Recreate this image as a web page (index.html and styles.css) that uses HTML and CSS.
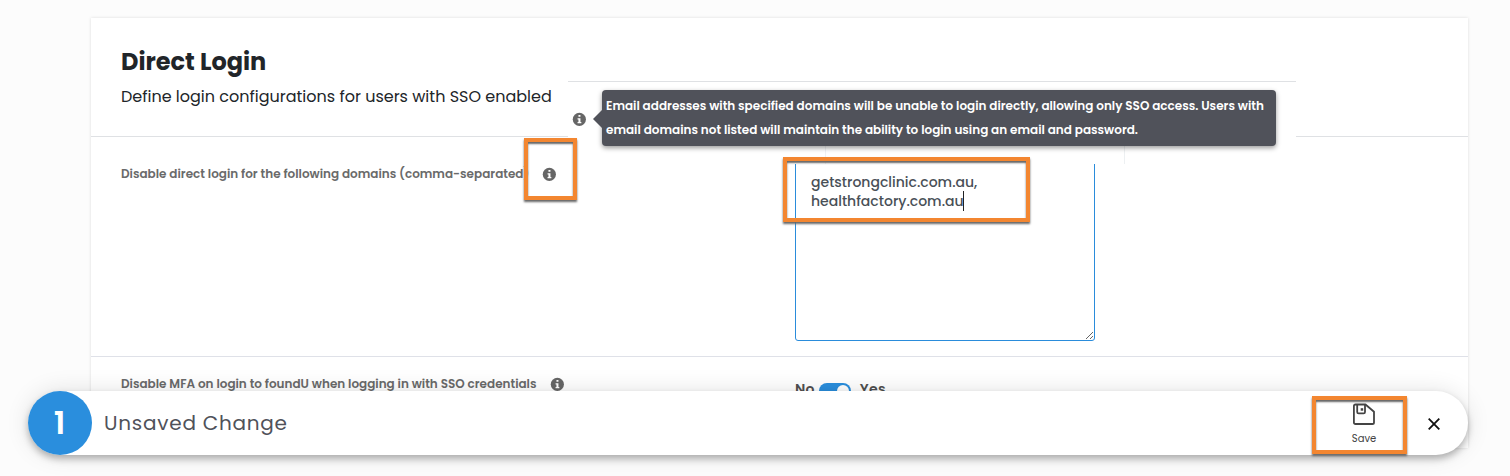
FILE: index.html
```html
<!DOCTYPE html>
<html lang="en">
<head>
<meta charset="utf-8">
<title>Direct Login</title>
<link rel="stylesheet" href="styles.css">
</head>
<body>
<svg class="defs" width="0" height="0">
  <symbol id="info" viewBox="-.35 -.35 14 14">
    <circle cx="7" cy="7" r="6.6" fill="#666"/>
    <path d="M6.1 2.7h2v1.8h-2zM5.2 5.8h2.9v3.9h.9v1.3H5.2V9.700h.9V7.100h-.9z" fill="#fff"/>
  </symbol>
</svg>
<main class="card">
  <header class="card-header">
    <h1 class="title">Direct Login</h1>
    <p class="subtitle">Define login configurations for users with SSO enabled</p>
  </header>
  <section class="row row-domains">
    <div class="label-cell">
      <label class="label label-domains" for="domains">Disable direct login for the following domains (comma-separated)</label>
      <svg class="info info-domains"><use href="#info"/></svg>
    </div>
    <textarea class="domains" id="domains" spellcheck="false">getstrongclinic.com.au,
healthfactory.com.au</textarea>
  </section>
  <section class="row row-mfa">
    <div class="label-cell">
      <span class="label label-mfa">Disable MFA on login to foundU when logging in with SSO credentials</span>
      <svg class="info"><use href="#info"/></svg>
    </div>
    <div class="switch">
      <span>No</span><span class="track"><span class="knob"></span></span><span>Yes</span>
    </div>
  </section>
</main>

<aside class="hint">
  <svg class="info"><use href="#info"/></svg>
  <div class="tooltip">
    <div class="tip-one">Email addresses with specified domains will be unable to login directly, allowing only SSO access. Users with</div>
    <div class="tip-two">email domains not listed will maintain the ability to login using an email and password.</div>
  </div>
</aside>
<i class="caret"></i>

<footer class="savebar">
  <span class="count">1</span>
  <span class="message">Unsaved Change</span>
  <button class="save">
    <svg width="24" height="23" viewBox="0 0 24 23" fill="none" stroke="#444" stroke-width="1.8" stroke-linejoin="round">
      <path d="M3.500 1.500H13.500L22 8.700V19.400Q22 21 20.400 21H3.500Q1.900 21 1.900 19.400V3.100Q1.900 1.500 3.500 1.500Z"/>
      <path d="M5.200 1.500V9Q5.200 10.400 6.600 10.400H11.600Q13 10.400 13 9V1.500"/>
      <rect x="8.700" y="5.200" width="2.500" height="2.500" fill="#444" stroke="none"/>
    </svg>
    <span>Save</span>
  </button>
  <button class="close" aria-label="Close">
    <svg width="12" height="12" viewBox="0 0 12 12" stroke="#111" stroke-width="1.800"><path d="M.7 .7L11.300 11.300M11.300 .7L.7 11.300"/></svg>
  </button>
</footer>
<i class="mark mark-info"></i>
<i class="mark mark-domains"></i>
<i class="mark mark-save"></i>
</body>
</html>
```
FILE: styles.css
```css
* { box-sizing: border-box; }
body {
  margin: 0;
  height: 476px;
  padding: 18px 42px 0 91px;
  overflow: hidden;
  position: relative;
  background: #fcfcfc;
  font-family: Poppins, Inter, "Open Sans", sans-serif;
  color: #212529;
}
.defs { position: absolute; }
.card {
  width: 1377px;
  height: 430px;
  background: #fff;
  box-shadow: 0 0 3px rgba(0, 0, 0, .13);
}
.card-header {
  height: 119px;
  padding: 26px 30px 0;
  border-bottom: 1px solid #dfe1e4;
}
.title { margin: 0; font-size: 24px; line-height: 36px; font-weight: 700; }
.subtitle { margin: 5px 0 0; font-size: 16px; line-height: 24px; white-space: nowrap; }
.row { display: grid; grid-template-columns: 674px 1fr; padding: 0 30px; }
.row-domains { height: 220px; border-bottom: 1px solid #dfe1e8; padding-top: 20px; }
.row-mfa { padding-top: 17px; }
.label-cell { display: flex; align-items: center; height: 20px; }
.row-domains .label-cell { margin-top: 7px; }
.label { font-size: 12px; font-weight: 600; color: #6a6a6a; white-space: nowrap; }
.label-domains { width: 421px; }
.label-mfa { width: 429px; }
.info { width: 14px; height: 14px; flex: none; }
.domains {
  width: 300px;
  height: 184px;
  padding: 15px;
  border: 1px solid #2a8cdb;
  border-radius: 3px;
  outline: none;
  overflow: hidden;
  background: #fff;
  color: #495057;
  font: 500 14px/19px Poppins, Inter, "Open Sans", sans-serif;
}
.switch { display: flex; align-items: flex-start; font-size: 14px; line-height: 20px; font-weight: 600; color: #505050; padding-top: 5px; letter-spacing: .3px; }
.track { width: 32px; height: 16px; margin: 4px 9px 0 4px; padding: 2px; border-radius: 8px; background: #2a8edd; display: flex; justify-content: flex-end; }
.knob { width: 12px; height: 12px; border-radius: 50%; background: #fff; }

.hint {
  position: absolute;
  left: 568px;
  top: 81px;
  width: 728px;
  height: 83px;
  padding: 9px 20px 0 4px;
  display: flex;
  gap: 16px;
  background: linear-gradient(#f0f1f4, #f0f1f4) 257px 100% / 1px 20px no-repeat, linear-gradient(#edf0f2, #edf0f2) 556px 100% / 1px 20px no-repeat, #fff;
  border-top: 1px solid #dfe1e4;
}
.hint .info { margin-top: 21px; }
.tooltip {
  position: relative;
  margin-top: -1px;
  width: 674px;
  height: 56px;
  padding: 4px;
  border-radius: 4px;
  background: #50525a;
  color: #fff;
  font-size: 12px;
  font-weight: 600;
  line-height: 24px;
  white-space: nowrap;
  box-shadow: 0 2px 5px rgba(0, 0, 0, .4);
}
.tooltip::before {
  content: "";
  position: absolute;
  left: -9px;
  top: 20px;
  border: 9px solid transparent;
  border-left: 0;
  border-right-color: #50525a;
}
.caret { position: absolute; left: 963px; top: 191px; width: 1px; height: 20px; background: #222; }

.savebar {
  position: absolute;
  left: 28px;
  top: 391px;
  width: 1440px;
  height: 64px;
  border-radius: 32px;
  background: #fff;
  display: flex;
  align-items: center;
  box-shadow: 0 4px 7px rgba(0, 0, 0, .27), 0 0 24px rgba(0, 0, 0, .11);
}
.count { width: 64px; height: 64px; border-radius: 50%; background: #2a8edd; color: #fff; font-size: 32px; line-height: 64px; font-weight: 600; text-align: center; text-indent: -1px; }
.message { margin-left: 12px; flex: 1; font-size: 20px; color: #50525a; letter-spacing: .75px; }
button { border: 0; padding: 0; background: none; font: inherit; color: inherit; }
.save { width: 60px; display: flex; flex-direction: column; align-items: center; gap: 6px; padding-top: 2px; font-size: 10px; line-height: 14px; color: #444; }
.close { display: flex; width: 12px; margin: 2px 28px 0 34px; }

.mark { position: absolute; border: 4px solid #f38630; box-shadow: 0 2px 2px #666, inset 0 2px 2px #666; }
.mark-info { left: 524px; top: 138px; width: 53px; height: 62px; }
.mark-domains { left: 783px; top: 157px; width: 247px; height: 65px; }
.mark-save { left: 1312px; top: 396px; width: 95px; height: 58px; }
```
